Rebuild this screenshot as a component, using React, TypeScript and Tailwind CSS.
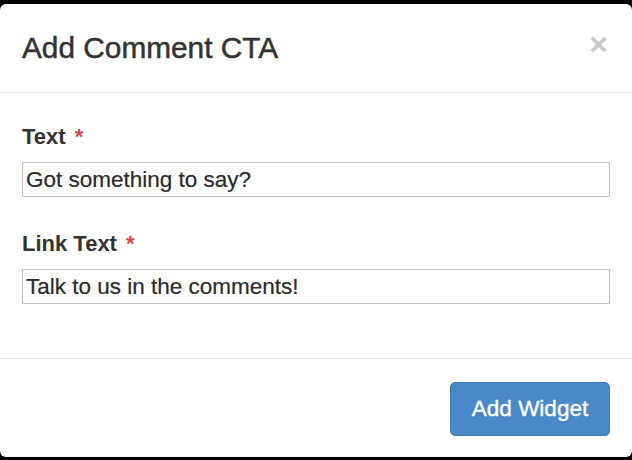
import React from "react";

export default function App() {
  const font = { fontFamily: '"Liberation Sans", Arial, Helvetica, sans-serif' };
  return (
    <div className="w-[632px] h-[460px] bg-black pt-[4px] overflow-hidden" style={font}>
      <div className="bg-white rounded-[6px] h-[453px] flex flex-col overflow-hidden">
        <div className="h-[89px] shrink-0 border-b border-[#e5e5e5] pl-[22px] pr-[24px] flex items-center justify-between">
          <h1 className="text-[29.8px] leading-none text-[#333] font-normal [-webkit-text-stroke:0.5px_#333]">Add Comment CTA</h1>
          <span className="text-[32px] leading-none font-bold text-[#c8c8c8] -mt-[9px]">×</span>
        </div>
        <div className="flex-1 px-[22px] pt-[29px]">
          <div className="text-[22px] leading-[30px] font-bold text-[#333]">
            Text <span className="text-[#cc4b47] ml-[3px]">*</span>
          </div>
          <div className="mt-[10px] h-[35px] border border-[#c2c2c2] pl-[3px] flex items-center text-[22.5px] text-[#2a2a2a] [-webkit-text-stroke:0.2px_#2a2a2a]">
            Got something to say?
          </div>
          <div className="mt-[32px] text-[22px] leading-[30px] font-bold text-[#333]">
            Link Text <span className="text-[#cc4b47] ml-[3px]">*</span>
          </div>
          <div className="mt-[10px] h-[35px] border border-[#c2c2c2] pl-[3px] flex items-center text-[22.5px] text-[#2a2a2a] [-webkit-text-stroke:0.2px_#2a2a2a]">
            Talk to us in the comments!
          </div>
        </div>
        <div className="h-[99px] shrink-0 border-t border-[#e5e5e5] flex justify-end pt-[23px] pr-[22px]">
          <button className="w-[160px] h-[54px] rounded-[5px] bg-[#4a89c7] border border-[#3d7ab8] text-white text-[22.5px] [-webkit-text-stroke:0.4px_#fff]">
            Add Widget
          </button>
        </div>
      </div>
    </div>
  );
}
